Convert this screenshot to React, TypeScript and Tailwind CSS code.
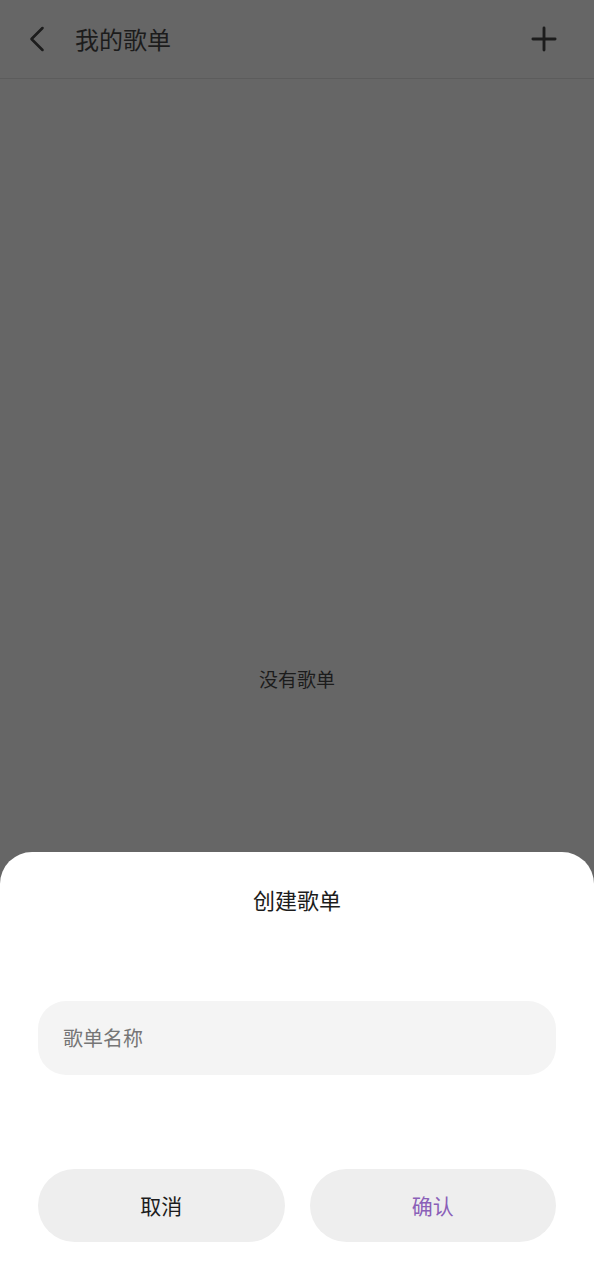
import { ChevronLeft, Plus } from "lucide-react";

const font = {
  fontFamily: '"Noto Sans CJK SC", "Noto Sans", sans-serif',
};

export default function App() {
  return (
    <div className="relative h-[1280px] w-full overflow-hidden bg-[#666666]" style={font}>
      {/* Header */}
      <header className="h-[79px] flex items-center border-b border-[#5c5c5c] pl-[15px] pr-[31px]">
        <button aria-label="Back" className="flex items-center justify-center w-[44px] h-[44px]">
          <ChevronLeft size={44} strokeWidth={1.4} className="text-[#1c1c1c]" />
        </button>
        <h1 className="ml-[16px] text-[24px] leading-none text-[#1c1c1c]">我的歌单</h1>
        <button aria-label="Add" className="ml-auto flex items-center justify-center">
          <Plus size={38} strokeWidth={1.8} className="text-[#1c1c1c]" />
        </button>
      </header>

      {/* Empty state */}
      <main className="h-[1201px] flex items-center justify-center">
        <p className="text-[19px] text-[#1c1c1c]">没有歌单</p>
      </main>

      {/* Bottom sheet */}
      <div className="absolute left-0 right-0 bottom-0 h-[428px] bg-white rounded-t-[32px] px-[38px] pt-[31px] pb-[38px] flex flex-col">
        <h2 className="text-center text-[22px] leading-[32px] text-[#1c1c1c]">创建歌单</h2>
        <div className="mt-[86px] h-[74px] rounded-[28px] bg-[#f4f4f4] flex items-center px-[25px]">
          <input
            placeholder="歌单名称"
            className="w-full bg-transparent outline-none text-[20px] text-[#222] placeholder:text-[#767676]"
          />
        </div>
        <div className="mt-auto flex gap-[25px]">
          <button className="flex-1 h-[73px] rounded-full bg-[#eeeeee] text-[21px] text-[#1c1c1c]">取消</button>
          <button className="flex-1 h-[73px] rounded-full bg-[#eeeeee] text-[21px] text-[#8a60b8]">确认</button>
        </div>
      </div>
    </div>
  );
}
